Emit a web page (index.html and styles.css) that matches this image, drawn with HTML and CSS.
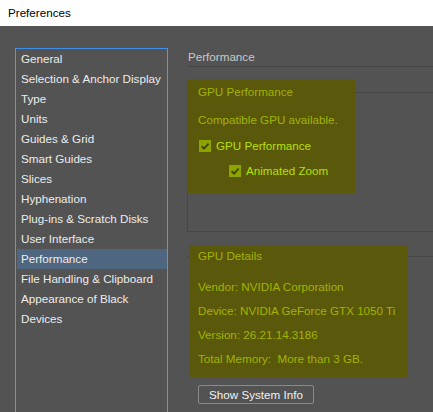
FILE: index.html
```html
<!DOCTYPE html>
<html>
<head>
<meta charset="utf-8">
<link rel="stylesheet" href="styles.css">
</head>
<body>
<div class="titlebar">Preferences</div>
<div class="main">
  <ul class="nav">
    <li>General</li>
    <li>Selection &amp; Anchor Display</li>
    <li>Type</li>
    <li>Units</li>
    <li>Guides &amp; Grid</li>
    <li>Smart Guides</li>
    <li>Slices</li>
    <li>Hyphenation</li>
    <li>Plug-ins &amp; Scratch Disks</li>
    <li>User Interface</li>
    <li class="sel">Performance</li>
    <li>File Handling &amp; Clipboard</li>
    <li>Appearance of Black</li>
    <li>Devices</li>
  </ul>
  <div class="panel">
    <div class="header">Performance</div>
    <fieldset class="fs fs1">
      <div class="hl hl1"></div>
      <legend>GPU Performance</legend>
      <div class="line dim first">Compatible GPU available.</div>
      <div class="check c1"><span class="box"><svg viewBox="0 0 12 12" width="12" height="12"><path d="M2.6 6.2 L5 8.6 L9.6 3.6" fill="none" stroke="#404300" stroke-width="1.8"/></svg></span>GPU Performance</div>
      <div class="check c2"><span class="box"><svg viewBox="0 0 12 12" width="12" height="12"><path d="M2.6 6.2 L5 8.6 L9.6 3.6" fill="none" stroke="#404300" stroke-width="1.8"/></svg></span>Animated Zoom</div>
    </fieldset>
    <fieldset class="fs fs2">
      <div class="hl hl2"></div>
      <legend>GPU Details</legend>
      <div class="line dim first2">Vendor: NVIDIA Corporation</div>
      <div class="line dim">Device: NVIDIA GeForce GTX 1050 Ti</div>
      <div class="line dim">Version: 26.21.14.3186</div>
      <div class="line dim">Total Memory:&nbsp; More than 3 GB.</div>
      <button class="btn">Show System Info</button>
    </fieldset>
  </div>
</div>
</body>
</html>
```

FILE: styles.css
```css
html, body {
  margin: 0;
  padding: 0;
  height: 100%;
  overflow: hidden;
}
body {
  background: #535353;
  font-family: "Liberation Sans", Arial, sans-serif;
  font-size: 11.65px;
}
.titlebar {
  height: 26px;
  line-height: 26px;
  background: #ffffff;
  color: #000000;
  padding-left: 8px;
  box-sizing: border-box;
}
.main {
  display: flex;
  padding-left: 15px;
  padding-top: 22px;
  gap: 19px;
}
.nav {
  list-style: none;
  margin: 0;
  padding: 0 0 0 1px;
  width: 150px;
  height: 380px;
  border: 1px solid #5d97d3;
  border-top-color: #3d8fe6;
  flex: none;
}
.nav li {
  height: 20px;
  line-height: 20px;
  padding-left: 4px;
  color: #ececec;
  white-space: nowrap;
}
.nav li.sel {
  background: #4e6680;
}
.panel {
  flex: 1;
  min-width: 0;
}
.header {
  height: 18px;
  line-height: 18px;
  padding-left: 1px;
  color: #c9c9c9;
  border-bottom: 1px solid #474747;
}
.fs {
  position: relative;
  z-index: 0;
  margin: 0;
  min-width: 0;
  border: 1px solid #474747;
  border-right: none;
  padding: 0 0 0 10px;
}
.fs legend {
  padding: 0 3px;
  margin-left: -3px;
  line-height: 16px;
  color: #a1b300;
}
.fs1 {
  margin-top: 17px;
  padding-bottom: 52px;
}
.fs2 {
  margin-top: 16px;
  border-left: none;
  border-bottom: none;
  padding-left: 11px;
  padding-bottom: 20px;
}
.hl {
  position: absolute;
  z-index: -1;
  background: rgba(92, 90, 0, 0.86);
}
.hl1 {
  left: -1px;
  top: -21px;
  width: 168px;
  height: 114px;
}
.hl2 {
  left: 2px;
  top: -19px;
  width: 219px;
  height: 132px;
}
.line {
  line-height: 16px;
  white-space: nowrap;
}
.dim {
  color: #a1b300;
}
.first {
  margin-top: 12px;
}
.first2 {
  margin-top: 15px;
}
.fs2 .line + .line {
  margin-top: 8px;
}
.check {
  display: flex;
  align-items: center;
  height: 16px;
  line-height: 16px;
  color: #b6e000;
  white-space: nowrap;
}
.c1 {
  margin-top: 10px;
  padding-left: 1px;
}
.c2 {
  margin-top: 9px;
  padding-left: 31px;
}
.box {
  width: 12px;
  height: 12px;
  background: #8da300;
  margin-right: 5px;
  display: block;
  flex: none;
}
.box svg {
  display: block;
}
.btn {
  display: block;
  margin-top: 18px;
  height: 19px;
  width: 116px;
  padding: 0;
  background: #535353;
  border: 1px solid #8a8a8a;
  border-radius: 2px;
  color: #f2f2f2;
  font-family: "Liberation Sans", Arial, sans-serif;
  font-size: 11.65px;
  line-height: 17px;
}
```
